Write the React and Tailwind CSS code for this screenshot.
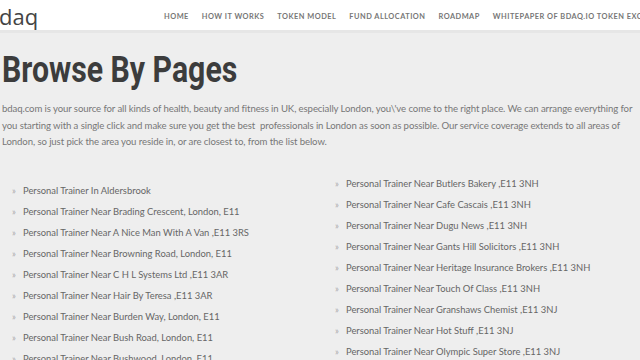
const navItems = ['Home', 'How It Works', 'Token Model', 'Fund Allocation', 'Roadmap', 'Whitepaper of bdaq.io Token Exchange'];

const leftList = [
  'Personal Trainer In Aldersbrook',
  'Personal Trainer Near Brading Crescent, London, E11',
  'Personal Trainer Near A Nice Man With A Van ,E11 3RS',
  'Personal Trainer Near Browning Road, London, E11',
  'Personal Trainer Near C H L Systems Ltd ,E11 3AR',
  'Personal Trainer Near Hair By Teresa ,E11 3AR',
  'Personal Trainer Near Burden Way, London, E11',
  'Personal Trainer Near Bush Road, London, E11',
  'Personal Trainer Near Bushwood, London, E11',
];

const rightList = [
  'Personal Trainer Near Butlers Bakery ,E11 3NH',
  'Personal Trainer Near Cafe Cascais ,E11 3NH',
  'Personal Trainer Near Dugu News ,E11 3NH',
  'Personal Trainer Near Gants Hill Solicitors ,E11 3NH',
  'Personal Trainer Near Heritage Insurance Brokers ,E11 3NH',
  'Personal Trainer Near Touch Of Class ,E11 3NH',
  'Personal Trainer Near Granshaws Chemist ,E11 3NJ',
  'Personal Trainer Near Hot Stuff ,E11 3NJ',
  'Personal Trainer Near Olympic Super Store ,E11 3NJ',
];

const PageList = ({ items, className }) => (
  <ul className={className}>
    {items.map((item) => (
      <li key={item} className="flex items-center h-[21px] whitespace-nowrap">
        <span className="w-[11px] text-[9px] text-[#aaa]">»</span>
        <span>{item}</span>
      </li>
    ))}
  </ul>
);

const App = () => {
  return (
    <div className="w-[640px] h-[360px] overflow-hidden bg-[#eeeeee] font-['Lato','Open_Sans',sans-serif]">
      <header className="h-[33px] bg-white border-b-[3px] border-[#e6e6e6] flex items-center">
        <div className="w-[33px] shrink-0 text-[22px] leading-none text-[#444] -ml-[1px] pt-[2px] font-['Open_Sans',sans-serif]">daq</div>
        <nav className="ml-[132px] pt-[3px] flex gap-[13px] whitespace-nowrap text-[7.4px] font-bold tracking-[0.065em] uppercase text-[#777] font-['Lato',sans-serif]">
          {navItems.map((item) => (
            <span key={item}>{item}</span>
          ))}
        </nav>
      </header>

      <main className="px-[2px]">
        <h1 className="mt-[17px] text-[36px] leading-[40px] font-bold text-[#3c3c3c] font-['Roboto',sans-serif]">
          <span className="inline-block origin-left scale-x-[0.84] whitespace-nowrap">Browse By Pages</span>
        </h1>
        <p className="mt-[11px] text-[9.6px] leading-[16.5px] tracking-[-0.01em] text-[#777] whitespace-nowrap">
          bdaq.com is your source for all kinds of health, beauty and fitness in UK, especially London, you\'ve come to the right place. We can arrange everything for
          <br />
          you starting with a single click and make sure you get the best&nbsp; professionals in London as soon as possible. Our service coverage extends to all areas of
          <br />
          London, so just pick the area you reside in, or are closest to, from the list below.
        </p>

        <div className="mt-[23px] flex text-[9.4px] text-[#666]">
          <PageList items={leftList} className="w-[323px] pl-[10px] mt-[7px]" />
          <PageList items={rightList} className="pl-[10px]" />
        </div>
      </main>
    </div>
  );
};

export default App;
